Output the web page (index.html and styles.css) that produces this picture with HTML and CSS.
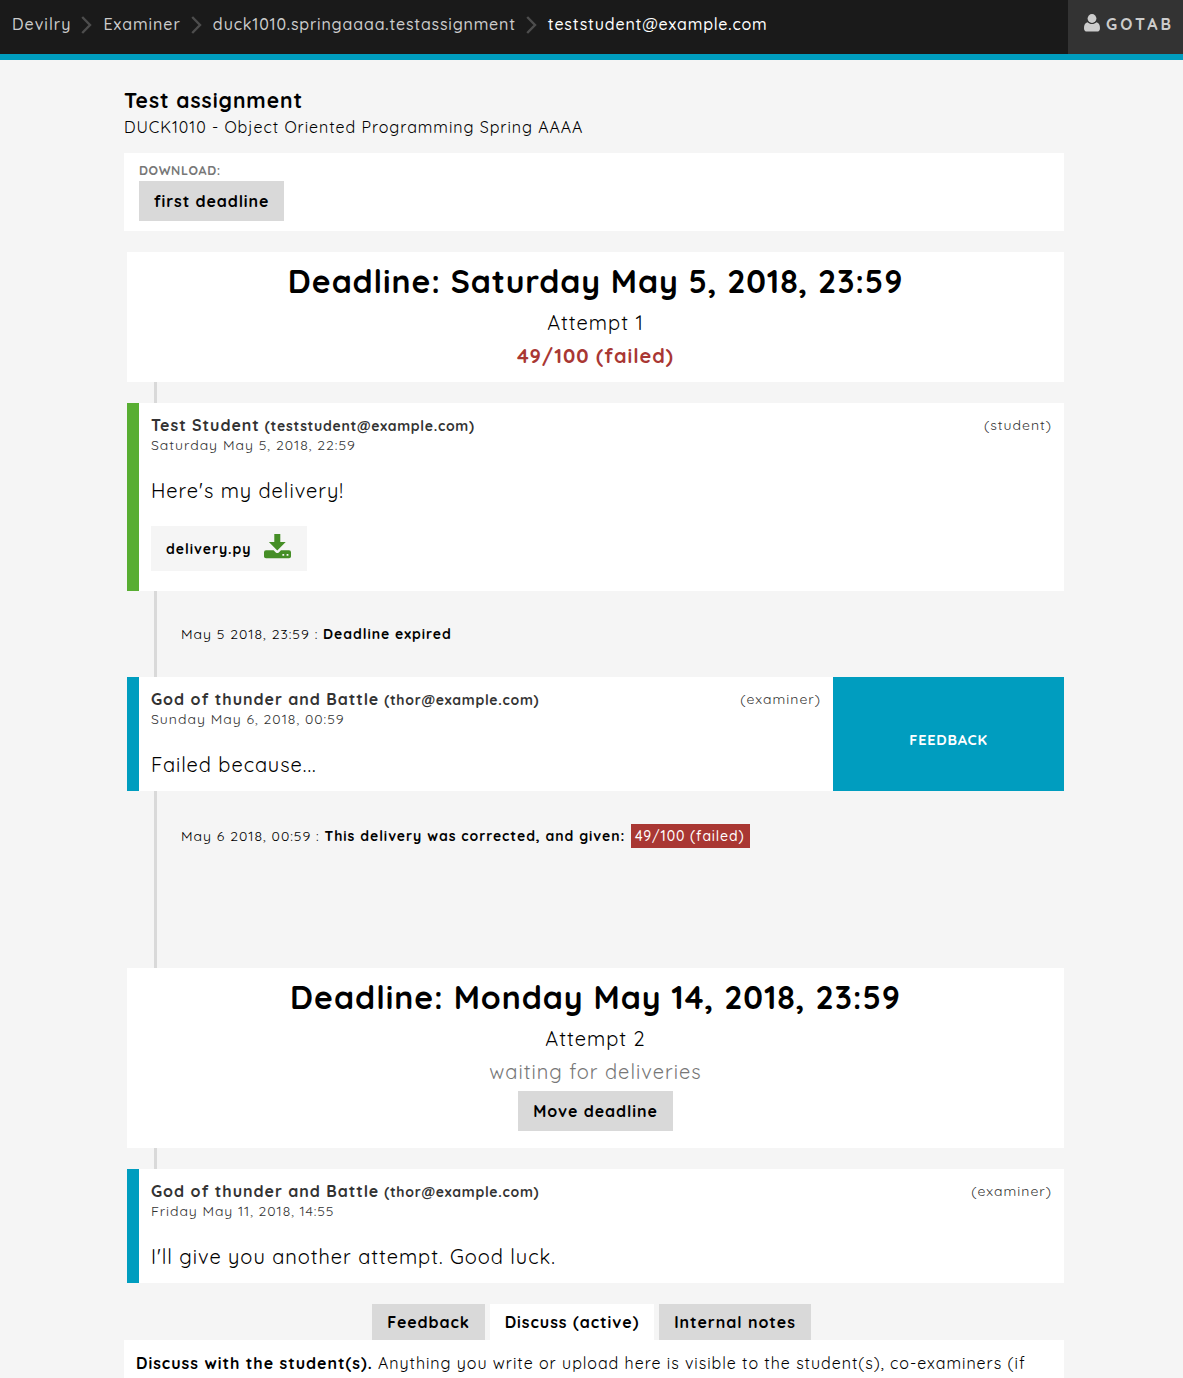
FILE: index.html
```html
<!DOCTYPE html>
<html lang="en">
<head>
<meta charset="utf-8">
<title>Devilry - Test assignment</title>
<link rel="stylesheet" href="styles.css">
</head>
<body>
<header class="topbar">
  <nav class="crumbs">
    <a class="crumb crumb-home">Devilry</a>
    <svg class="chevron" width="11" height="18" viewBox="0 0 11 18"><path d="M1.2 1 9 9 1.2 17"/></svg>
    <a class="crumb">Examiner</a>
    <svg class="chevron" width="11" height="18" viewBox="0 0 11 18"><path d="M1.2 1 9 9 1.2 17"/></svg>
    <a class="crumb crumb-assignment">duck1010.springaaaa.testassignment</a>
    <svg class="chevron" width="11" height="18" viewBox="0 0 11 18"><path d="M1.2 1 9 9 1.2 17"/></svg>
    <a class="crumb crumb-active">teststudent@example.com</a>
  </nav>
  <a class="user">
    <svg class="user-icon" width="16" height="18" viewBox="0 0 16 18"><path d="M3.6 8.2C1 8.8 0 11 0 14.2 0 16.400 1.200 17.600 3 17.600h10c1.800 0 3-1.200 3-3.400 0-3.200-1-5.400-3.600-6C11.300 9.400 9.800 10 8 10s-3.300-.6-4.400-1.800z"/><circle cx="8" cy="4.500" r="4.400"/></svg>
    <span class="user-name">GOTAB</span>
  </a>
</header>

<main class="page">
  <h1 class="title">Test assignment</h1>
  <p class="subtitle">DUCK1010 - Object Oriented Programming Spring AAAA</p>

  <section class="download">
    <h2 class="download-label">DOWNLOAD:</h2>
    <button class="button button-first">first deadline</button>
  </section>

  <div class="feed">
    <section class="deadline">
      <h2 class="deadline-title">Deadline: Saturday May 5, 2018, 23:59</h2>
      <p class="attempt">Attempt 1</p>
      <p class="score">49/100 (failed)</p>
    </section>

    <article class="comment comment-student">
      <div class="comment-body">
        <div class="comment-head">
          <h3 class="author"><span class="name">Test Student</span><span class="email">(teststudent@example.com)</span></h3>
          <span class="role">(student)</span>
        </div>
        <p class="date">Saturday May 5, 2018, 22:59</p>
        <p class="message">Here's my delivery!</p>
        <a class="file">
          <span class="file-name">delivery.py</span>
          <svg class="file-icon" width="27" height="25" viewBox="0 0 27 25"><path fill-rule="evenodd" d="M10.300 0h6v8h5.400L13.300 16.400 4.900 8h5.400zM2 16.200h7.600l2.200 2.200q1.500 1.300 3 0l2.200-2.200H25q2 0 2 2V22.500q0 1.800-2 1.800H2q-2 0-2-1.800V18.200q0-2 2-2zM18.400 20v1.800h1.800V20zM22.600 20v1.800h1.800V20z"/></svg>
        </a>
      </div>
    </article>

    <p class="event"><span class="event-date">May 5 2018, 23:59 :</span><strong class="event-text">Deadline expired</strong></p>

    <article class="comment comment-examiner comment-feedback">
      <div class="comment-body">
        <div class="comment-head">
          <h3 class="author"><span class="name">God of thunder and Battle</span><span class="email">(thor@example.com)</span></h3>
          <span class="role">(examiner)</span>
        </div>
        <p class="date">Sunday May 6, 2018, 00:59</p>
        <p class="message">Failed because...</p>
      </div>
      <div class="feedback-flag">FEEDBACK</div>
    </article>

    <p class="event event-graded"><span class="event-date">May 6 2018, 00:59 :</span><strong class="event-text">This delivery was corrected, and given:</strong><span class="grade">49/100 (failed)</span></p>

    <section class="deadline deadline-second">
      <h2 class="deadline-title">Deadline: Monday May 14, 2018, 23:59</h2>
      <p class="attempt">Attempt 2</p>
      <p class="waiting">waiting for deliveries</p>
      <button class="button button-move">Move deadline</button>
    </section>

    <article class="comment comment-examiner">
      <div class="comment-body">
        <div class="comment-head">
          <h3 class="author"><span class="name">God of thunder and Battle</span><span class="email">(thor@example.com)</span></h3>
          <span class="role">(examiner)</span>
        </div>
        <p class="date date-friday">Friday May 11, 2018, 14:55</p>
        <p class="message">I'll give you another attempt. Good luck.</p>
      </div>
    </article>
  </div>

  <div class="tabs">
    <button class="tab tab-feedback">Feedback</button>
    <button class="tab tab-active">Discuss (active)</button>
    <button class="tab tab-notes">Internal notes</button>
  </div>
  <section class="discuss"><strong class="discuss-lead">Discuss with the student(s).</strong><span class="discuss-text">Anything you write or upload here is visible to the student(s), co-examiners (if</span></section>
</main>
</body>
</html>
```
FILE: styles.css
```css
* { box-sizing: border-box; }
html { overflow: hidden; }
body {
  margin: 0;
  height: 1378px;
  overflow: hidden;
  background: #f5f5f5;
  color: #000;
  font: 16px/24px Quicksand, Lato, sans-serif;
  letter-spacing: 1px;
  white-space: nowrap;
}
h1, h2, h3, p { margin: 0; }
button { border: 0; font: inherit; color: inherit; letter-spacing: inherit; }

.topbar {
  display: flex;
  justify-content: space-between;
  height: 60px;
  background: #1a1a1a;
  border-bottom: 6px solid #009dbf;
}
.crumbs { display: flex; padding-left: 12px; font-weight: 500; line-height: 48px; }
.crumb { color: #ccc; letter-spacing: .95px; }
.crumb-home { letter-spacing: 1px; }
.crumb-assignment { letter-spacing: .8px; }
.crumb-active { color: #fff; letter-spacing: .82px; }
.chevron { margin: 16px 11px 0 10px; fill: none; stroke: #4d4d4d; stroke-width: 2.4; }
.user {
  display: flex;
  width: 115px;
  padding-left: 16px;
  background: #333;
  color: #ccc;
  font-weight: 700;
  line-height: 48px;
  letter-spacing: 3px;
}
.user-icon { margin: 14px 6px 0 0; fill: #ccc; }

.page { width: 940px; margin: 0 0 0 124px; padding-top: 25px; }
.title { font-size: 21px; line-height: 30px; letter-spacing: .95px; }
.subtitle { line-height: 24px; letter-spacing: .945px; }

.download { height: 78px; margin-top: 14px; padding: 9px 15px; background: #fff; }
.download-label { margin-bottom: 3px; color: #777; font-size: 12.5px; line-height: 16px; letter-spacing: .65px; }
.button {
  display: block;
  height: 40px;
  padding: 0;
  background: #d9d9d9;
  font-weight: 700;
  line-height: 40px;
  text-align: center;
}
.button-first { width: 145px; letter-spacing: .88px; }
.button-move { width: 155px; margin: 3px auto 0; letter-spacing: .92px; }

.feed {
  margin: 21px 0 0 3px;
  background: linear-gradient(#d9d9d9, #d9d9d9) 27px 0 / 3px 100% no-repeat;
}
.deadline { height: 130px; padding-top: 7px; background: #fff; text-align: center; }
.deadline-title { margin-bottom: 3px; font-size: 32px; line-height: 44px; letter-spacing: .88px; }
.attempt, .score, .waiting { font-size: 20px; line-height: 33px; letter-spacing: 1px; }
.score { color: #a93733; font-weight: 700; }
.waiting { color: #777; }
.deadline-second { height: 180px; }
.deadline-second .deadline-title { letter-spacing: .95px; }

.comment { display: flex; margin-top: 21px; background: #fff; border-left: 12px solid #009dbf; }
.comment-student { height: 188px; border-color: #58ae32; }
.comment-examiner { height: 114px; }
.comment-feedback { margin-top: 0; }
.comment-body { flex: 1; padding: 11px 12px 0; }
.comment-head { display: flex; justify-content: space-between; height: 21px; line-height: 22px; color: #333; }
.author { display: flex; font-size: 16px; letter-spacing: .96px; }
.email { margin-left: 5px; padding-top: 1px; font-size: 14px; letter-spacing: .72px; }
.role { font-size: 14px; letter-spacing: 1px; }
.date { color: #333; font-size: 14px; line-height: 21px; letter-spacing: 1px; }
.date-friday { letter-spacing: .93px; }
.message { margin-top: 21px; font-size: 20px; line-height: 28px; letter-spacing: .96px; }
.file {
  display: flex;
  align-items: flex-start;
  width: 156px;
  height: 45px;
  margin-top: 21px;
  padding-left: 15px;
  background: #f5f5f5;
  font-size: 14px;
  font-weight: 700;
  line-height: 46px;
}
.file-name { width: 98px; letter-spacing: .95px; }
.file-icon { margin-top: 8px; fill: #458e26; }
.feedback-flag {
  width: 231px;
  background: #009dbf;
  color: #fff;
  font-size: 14.5px;
  font-weight: 700;
  line-height: 126px;
  letter-spacing: .75px;
  text-align: center;
}

.event { display: flex; height: 86px; padding: 31px 0 0 54px; font-size: 14px; line-height: 24px; }
.event-date { width: 142px; letter-spacing: 1px; }
.event-text { letter-spacing: .94px; }
.event-graded { height: 177px; padding-top: 33px; }
.event-graded .event-date { width: 143.5px; }
.event-graded .event-text { width: 306.5px; letter-spacing: .95px; }
.grade { height: 24px; width: 119px; padding-left: 4px; background: #a93733; color: #fff; font-weight: 500; letter-spacing: .9px; }

.tabs { display: flex; gap: 5px; margin: 21px 0 0 248px; }
.tab { height: 36px; padding: 0; background: #d9d9d9; font-weight: 700; line-height: 36px; text-align: center; }
.tab-feedback { width: 113px; letter-spacing: .92px; }
.tab-active { width: 164px; background: #fff; letter-spacing: .98px; }
.tab-notes { width: 152px; letter-spacing: .96px; }
.discuss { display: flex; height: 80px; padding: 11px 12px; background: #fff; }
.discuss-lead { width: 242px; letter-spacing: .98px; }
.discuss-text { letter-spacing: .965px; }
```
